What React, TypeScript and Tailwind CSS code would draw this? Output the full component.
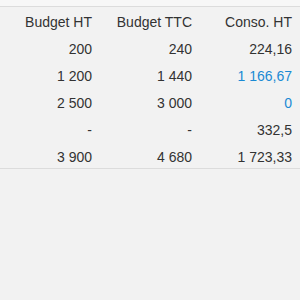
import React from "react";

const rows: { a: string; b: string; c: string; blue?: boolean }[] = [
  { a: "200", b: "240", c: "224,16" },
  { a: "1 200", b: "1 440", c: "1 166,67", blue: true },
  { a: "2 500", b: "3 000", c: "0", blue: true },
  { a: "-", b: "-", c: "332,5" },
  { a: "3 900", b: "4 680", c: "1 723,33" },
];

export default function App() {
  return (
    <div
      className="w-[300px] h-[300px] bg-[#f2f2f2] overflow-hidden text-[14px] leading-[16px] text-[#333333]"
      style={{ fontFamily: '"Liberation Sans", Arial, sans-serif' }}
    >
      <div className="h-[6px] bg-[#f7f7f7]" />
      <div className="border-t border-[#dcdcdc]">
        <div className="grid grid-cols-3 h-[27px] items-center pt-[3px]">
          <div className="text-right pr-2">Budget HT</div>
          <div className="text-right pr-2">Budget TTC</div>
          <div className="text-right pr-2">Conso. HT</div>
        </div>
        {rows.map((r, i) => (
          <div key={i} className="grid grid-cols-3 h-[27px] items-center pt-[2px] last:h-[26px] last:pt-[3px]">
            <div className="text-right pr-2">{r.a}</div>
            <div className="text-right pr-2">{r.b}</div>
            <div className={"text-right pr-2 " + (r.blue ? "text-[#1a8ad4]" : "")}>{r.c}</div>
          </div>
        ))}
      </div>
      <div className="border-t border-[#dcdcdc]" />
    </div>
  );
}
